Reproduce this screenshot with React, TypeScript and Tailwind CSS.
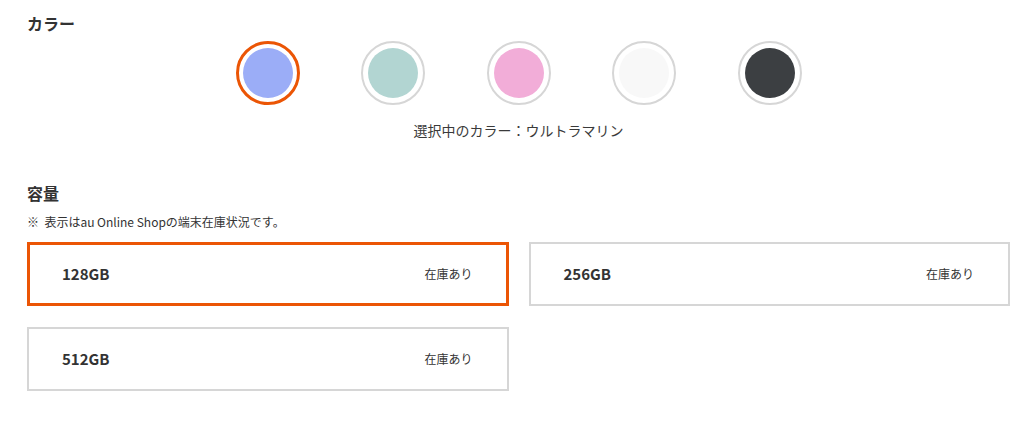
import React, { useState } from "react";

type Swatch = { name: string; fill: string };

const COLORS: Swatch[] = [
  { name: "ウルトラマリン", fill: "bg-[#9badf7]" },
  { name: "ミント", fill: "bg-[#b2d5d2]" },
  { name: "ピンク", fill: "bg-[#f2add8]" },
  { name: "ホワイト", fill: "bg-[#f8f8f8]" },
  { name: "ブラック", fill: "bg-[#3c3f42]" },
];

const CAPACITIES = ["128GB", "256GB", "512GB"];

export default function App() {
  const [color, setColor] = useState(0);
  const [capacity, setCapacity] = useState(0);

  return (
    <div
      className="w-[1030px] h-[422px] bg-white pl-[27px] pr-[20px] pt-[11px] text-[#333]"
      style={{ fontFamily: '"Noto Sans CJK JP", "Noto Sans", sans-serif' }}
    >
      <h2 className="text-base font-bold leading-6">カラー</h2>
      <div className="mt-[6px] flex justify-center gap-[61.5px]">
        {COLORS.map((c, i) => (
          <button
            key={c.name}
            onClick={() => setColor(i)}
            className={`w-16 h-16 rounded-full flex items-center justify-center ${
              i === color
                ? "border-[3px] border-[#eb5505]"
                : "border-2 border-[#d6d6d6]"
            }`}
          >
            <span className={`w-[50px] h-[50px] rounded-full ${c.fill}`} />
          </button>
        ))}
      </div>
      <p className="mt-[15px] text-sm leading-5 text-center text-[#3a3a3a]">
        選択中のカラー：{COLORS[color].name}
      </p>

      <h2 className="mt-[41px] text-base font-bold leading-6">容量</h2>
      <p className="mt-[8px] text-xs leading-[18px]">
        ※&nbsp;&nbsp;表示はau Online Shopの端末在庫状況です。
      </p>
      <div className="mt-[11px] grid grid-cols-2 gap-x-5 gap-y-[21px]">
        {CAPACITIES.map((cap, i) => (
          <button
            key={cap}
            onClick={() => setCapacity(i)}
            className={`h-16 flex items-center justify-between bg-white ${
              i === capacity
                ? "border-[3px] border-[#eb5505] pl-[32px] pr-[33px]"
                : "border-2 border-[#d6d6d6] pl-[33px] pr-[34px]"
            }`}
          >
            <span className="text-[15px] font-bold">{cap}</span>
            <span className="text-xs">在庫あり</span>
          </button>
        ))}
      </div>
    </div>
  );
}
